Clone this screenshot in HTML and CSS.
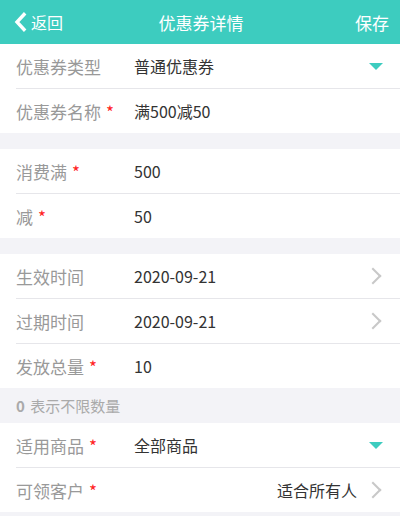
FILE: index.html
```html
<!DOCTYPE html>
<html lang="zh">
<head>
  <meta charset="UTF-8">
  <title>优惠券详情</title>
  <link rel="stylesheet" href="styles.css">
</head>
<body>
  <div class="header">
    <span class="back">
      <svg width="14" height="20" viewBox="0 0 14 20"><path d="M11 2.5 L4 10 L11 17.5" fill="none" stroke="#fff" stroke-width="3.4" stroke-linecap="square"/></svg>
      返回
    </span>
    <span class="title">优惠券详情</span>
    <span class="save">保存</span>
  </div>

  <div class="group">
    <div class="row">
      <span class="label">优惠券类型</span>
      <span class="value">普通优惠券</span>
      <span class="caret"></span>
    </div>
    <div class="row">
      <span class="label">优惠券名称<i class="req">*</i></span>
      <span class="value">满500减50</span>
    </div>
  </div>

  <div class="group">
    <div class="row">
      <span class="label">消费满<i class="req">*</i></span>
      <span class="value">500</span>
    </div>
    <div class="row">
      <span class="label">减<i class="req">*</i></span>
      <span class="value">50</span>
    </div>
  </div>

  <div class="group flush">
    <div class="row">
      <span class="label">生效时间</span>
      <span class="value">2020-09-21</span>
      <span class="arrow"></span>
    </div>
    <div class="row">
      <span class="label">过期时间</span>
      <span class="value">2020-09-21</span>
      <span class="arrow"></span>
    </div>
    <div class="row">
      <span class="label">发放总量<i class="req">*</i></span>
      <span class="value">10</span>
    </div>
  </div>

  <div class="hint"><b>0</b> 表示不限数量</div>

  <div class="group flush">
    <div class="row">
      <span class="label">适用商品<i class="req">*</i></span>
      <span class="value">全部商品</span>
      <span class="caret"></span>
    </div>
    <div class="row">
      <span class="label">可领客户<i class="req">*</i></span>
      <span class="value right">适合所有人</span>
      <span class="arrow"></span>
    </div>
  </div>
</body>
</html>
```

FILE: styles.css
```css
body {
  margin: 0;
  background: #f3f3f7;
  font-family: "Noto Sans CJK SC", "Noto Sans", sans-serif;
  color: #333;
}

.header {
  height: 44px;
  background: #3dccbf;
  color: #fff;
  display: grid;
  grid-template-columns: 1fr auto 1fr;
  align-items: center;
  padding: 0 11px 0 13px;
  font-size: 17px;
}

.back {
  display: flex;
  align-items: center;
  gap: 4px;
  font-size: 16px;
}

.back svg {
  display: block;
}

.save {
  justify-self: end;
}

.group {
  background: #fff;
  margin-bottom: 16px;
  padding-left: 16px;
}

.group.flush {
  margin-bottom: 0;
}

.row {
  height: 44px;
  display: flex;
  align-items: center;
  border-bottom: 1px solid #e6e6ea;
  padding-right: 17px;
}

.row:last-child {
  border-bottom: none;
}

.label {
  width: 118px;
  flex-shrink: 0;
  font-size: 17px;
  color: #999;
}

.req {
  font-style: normal;
  color: #f22;
  margin-left: 5px;
}

.value {
  flex: 1;
  font-size: 16px;
  color: #333;
}

.value.right {
  text-align: right;
  margin-right: 10px;
}

.caret {
  width: 0;
  height: 0;
  border-left: 7px solid transparent;
  border-right: 7px solid transparent;
  border-top: 7px solid #3dccbf;
}

.arrow {
  width: 10px;
  height: 10px;
  border-top: 2px solid #c8c8c8;
  border-right: 2px solid #c8c8c8;
  transform: rotate(45deg);
  margin-right: 4px;
}

.hint {
  height: 35px;
  line-height: 35px;
  padding-left: 16px;
  font-size: 15px;
  color: #aaa;
}

.hint b {
  margin-right: 2px;
}
```
